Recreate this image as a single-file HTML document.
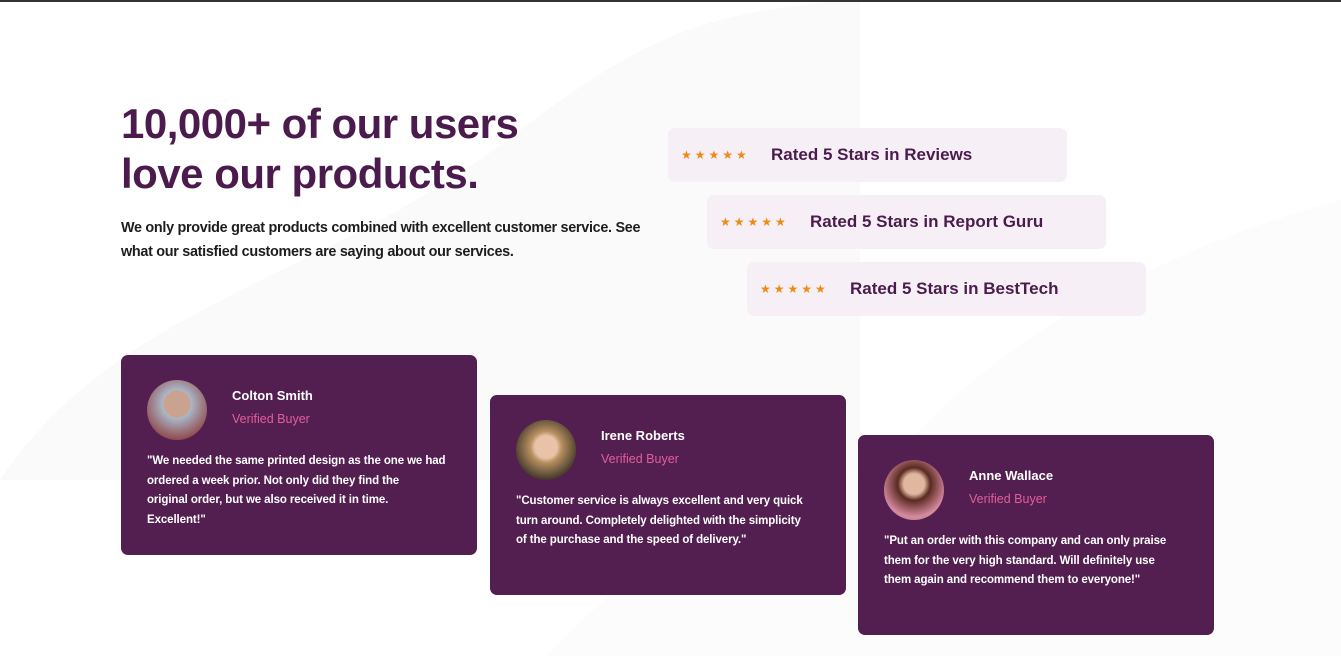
<!DOCTYPE html>
<html><head><meta charset="utf-8"><style>
*{margin:0;padding:0;box-sizing:border-box}
body{width:1341px;height:656px;overflow:hidden;background:#fff;font-family:"Liberation Sans",sans-serif;position:relative}
.top{position:absolute;left:0;top:0;width:1341px;height:2px;background:#333}
.bg{position:absolute;left:0;top:0}
h1{position:absolute;left:121px;top:99px;font-size:42px;line-height:50px;color:#4b1b4d;font-weight:bold;letter-spacing:-0.5px}
p.lead{position:absolute;left:121px;top:216px;width:560px;font-size:14.4px;line-height:24px;color:#1d1d1d;font-weight:bold;letter-spacing:-0.3px}
.rate{position:absolute;width:399px;height:54px;background:#f6f0f6;border-radius:7px;display:flex;align-items:center}
.rate .s{color:#ee8a16;font-size:12px;letter-spacing:3px;margin-left:13px;width:90px}
.rate .t{color:#4b1b4d;font-weight:bold;font-size:17px}
.card{position:absolute;width:356px;height:200px;background:#531f50;border-radius:7px;color:#fff}
.av{position:absolute;left:26px;top:25px;width:60px;height:60px;border-radius:50%}
.nm{position:absolute;left:111px;top:33px;font-size:13px;font-weight:bold}
.vb{position:absolute;left:111px;top:57px;font-size:12.5px;color:#e25e9a}
.q{position:absolute;left:26px;top:97px;width:330px;font-size:11.5px;line-height:19.5px;font-weight:bold;letter-spacing:-0.1px;white-space:nowrap}
</style></head><body>
<svg class="bg" width="1341" height="656"><path d="M0 480 C120 300 330 280 520 130 C640 40 700 10 860 0 L860 480 Z" fill="#fafafb"/><path d="M545 656 C640 560 760 470 880 480 C960 360 1150 250 1341 200 L1341 656 Z" fill="#fcfcfc"/></svg>
<div class="top"></div>
<h1>10,000+ of our users<br>love our products.</h1>
<p class="lead">We only provide great products combined with excellent customer service. See<br>what our satisfied customers are saying about our services.</p>
<div class="rate" style="left:668px;top:128px"><span class="s">★★★★★</span><span class="t">Rated 5 Stars in Reviews</span></div>
<div class="rate" style="left:707px;top:195px"><span class="s">★★★★★</span><span class="t">Rated 5 Stars in Report Guru</span></div>
<div class="rate" style="left:747px;top:262px"><span class="s">★★★★★</span><span class="t">Rated 5 Stars in BestTech</span></div>
<div class="card" style="left:121px;top:355px"><div class="av" style="background:radial-gradient(circle at 50% 40%,#c9a38f 0 28%,#aab8c8 30%,#8a2a2a 90%)"></div><div class="nm">Colton Smith</div><div class="vb">Verified Buyer</div><div class="q">"We needed the same printed design as the one we had<br>ordered a week prior. Not only did they find the<br>original order, but we also received it in time.<br>Excellent!"</div></div>
<div class="card" style="left:490px;top:395px"><div class="av" style="background:radial-gradient(circle at 50% 45%,#e8c3a8 0 25%,#b89060 35%,#2e2a22 80%)"></div><div class="nm">Irene Roberts</div><div class="vb">Verified Buyer</div><div class="q">"Customer service is always excellent and very quick<br>turn around. Completely delighted with the simplicity<br>of the purchase and the speed of delivery."</div></div>
<div class="card" style="left:858px;top:435px"><div class="av" style="background:radial-gradient(circle at 50% 40%,#e0b8a0 0 22%,#5a2a20 35%,#d78aa0 70%,#6a8a50)"></div><div class="nm">Anne Wallace</div><div class="vb">Verified Buyer</div><div class="q">"Put an order with this company and can only praise<br>them for the very high standard. Will definitely use<br>them again and recommend them to everyone!"</div></div>
</body></html>
